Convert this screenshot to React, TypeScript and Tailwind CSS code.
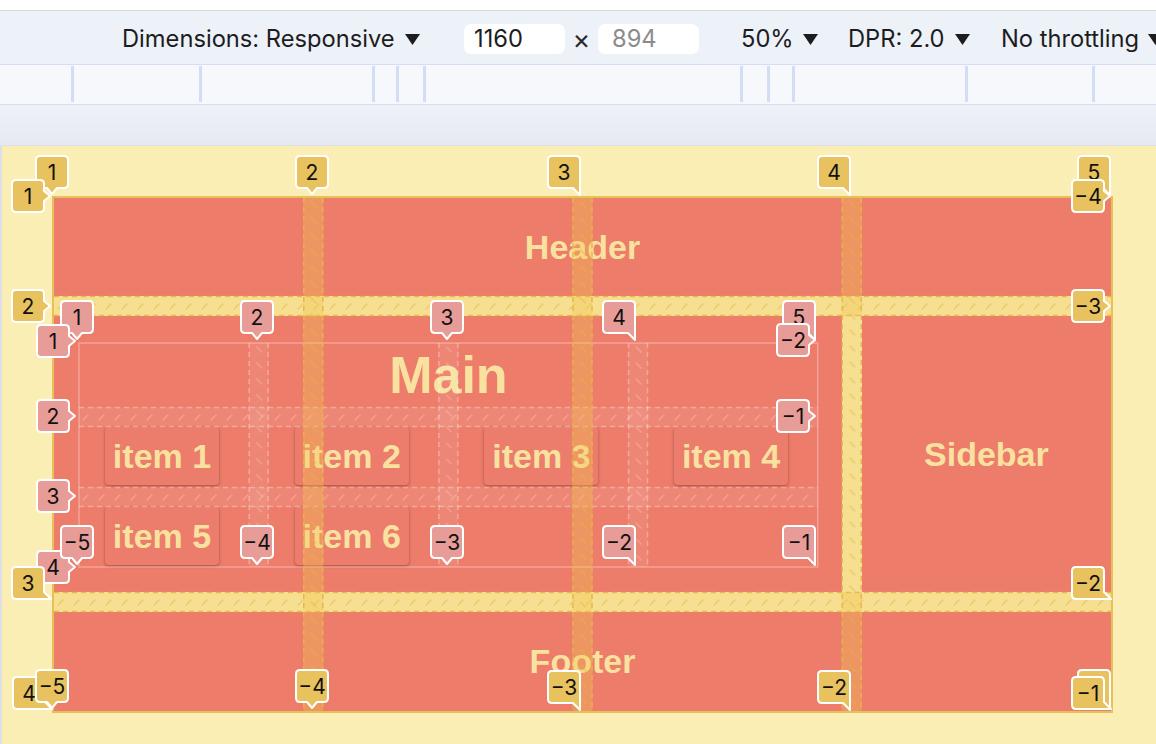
import type { ReactNode } from "react";

type Arrow = "down" | "right" | "tailDown" | "tailRight";
type Tag = { x: number; y: number; t: string; a: Arrow };

// label outlines, box is 34x34, arrow sticks out
const PATHS: Record<Arrow, string> = {
  down: "M5 1H29Q33 1 33 5V29Q33 33 29 33H22L17 39L12 33H5Q1 33 1 29V5Q1 1 5 1Z",
  right: "M5 1H29Q33 1 33 5V12L39 17L33 22V29Q33 33 29 33H5Q1 33 1 29V5Q1 1 5 1Z",
  tailDown: "M5 1H29Q33 1 33 5V40L26 33H5Q1 33 1 29V5Q1 1 5 1Z",
  tailRight: "M5 1H29Q33 1 33 5V26L40 33H5Q1 33 1 29V5Q1 1 5 1Z",
};

const innerTags: Tag[] = [
  { x: 60, y: 300, t: "1", a: "down" },
  { x: 240, y: 300, t: "2", a: "down" },
  { x: 430, y: 300, t: "3", a: "down" },
  { x: 602, y: 300, t: "4", a: "tailDown" },
  { x: 782, y: 300, t: "5", a: "tailDown" },
  { x: 36, y: 324, t: "1", a: "right" },
  { x: 36, y: 399, t: "2", a: "right" },
  { x: 36, y: 479, t: "3", a: "right" },
  { x: 36, y: 550, t: "4", a: "right" },
  { x: 776, y: 323, t: "−2", a: "right" },
  { x: 776, y: 399, t: "−1", a: "right" },
  { x: 60, y: 525, t: "−5", a: "down" },
  { x: 240, y: 525, t: "−4", a: "down" },
  { x: 430, y: 525, t: "−3", a: "down" },
  { x: 602, y: 525, t: "−2", a: "tailDown" },
  { x: 782, y: 525, t: "−1", a: "tailDown" },
];

const outerTags: Tag[] = [
  { x: 35, y: 155, t: "1", a: "down" },
  { x: 295, y: 155, t: "2", a: "down" },
  { x: 547, y: 155, t: "3", a: "tailDown" },
  { x: 817, y: 155, t: "4", a: "tailDown" },
  { x: 1077, y: 155, t: "5", a: "tailDown" },
  { x: 11, y: 179, t: "1", a: "right" },
  { x: 11, y: 289, t: "2", a: "right" },
  { x: 11, y: 566, t: "3", a: "tailRight" },
  { x: 1071, y: 179, t: "−4", a: "right" },
  { x: 1071, y: 289, t: "−3", a: "right" },
  { x: 1071, y: 566, t: "−2", a: "tailRight" },
  { x: 12, y: 676, t: "4", a: "tailRight" },
  { x: 35, y: 669, t: "−5", a: "down" },
  { x: 295, y: 669, t: "−4", a: "down" },
  { x: 547, y: 670, t: "−3", a: "tailDown" },
  { x: 817, y: 670, t: "−2", a: "tailDown" },
  { x: 1077, y: 669, t: "−1", a: "tailDown" },
  { x: 1071, y: 676, t: "−1", a: "tailRight" },
];

const ticks = [71, 199, 372, 396, 423, 740, 767, 792, 965, 1092];

function GridTag({ tag, fill }: { tag: Tag; fill: string }) {
  return (
    <div className="absolute h-[34px] w-[34px]" style={{ left: tag.x, top: tag.y }}>
      <svg className="absolute left-0 top-0 overflow-visible" width="34" height="34">
        <path d={PATHS[tag.a]} fill={fill} stroke="#fff" strokeWidth="2" strokeLinejoin="round" />
      </svg>
      <span className="relative flex h-full w-full items-center justify-center text-[21px] leading-none text-[#111]">
        {tag.t}
      </span>
    </div>
  );
}

function Caret() {
  return (
    <svg width="15" height="11" viewBox="0 0 15 11" className="shrink-0">
      <polygon points="0,0 15,0 7.5,11" fill="#1d1d1f" />
    </svg>
  );
}

type Gap = { x: number; y: number; w: number; h: number; dir: "h" | "v" };

function GapBand({ g, tint, tintOpacity, hatch, line, lineOpacity }: {
  g: Gap;
  tint: string;
  tintOpacity: number;
  hatch: string;
  line: string;
  lineOpacity: number;
}) {
  return (
    <g transform={`translate(${g.x} ${g.y})`}>
      <rect width={g.w} height={g.h} fill={tint} fillOpacity={tintOpacity} />
      <rect width={g.w} height={g.h} fill={`url(#${hatch})`} />
      {g.dir === "h" ? (
        <>
          <line x1="0" y1="0.5" x2={g.w} y2="0.5" stroke={line} strokeOpacity={lineOpacity} strokeWidth="1.5" strokeDasharray="5 4" />
          <line x1="0" y1={g.h - 0.5} x2={g.w} y2={g.h - 0.5} stroke={line} strokeOpacity={lineOpacity} strokeWidth="1.5" strokeDasharray="5 4" />
        </>
      ) : (
        <>
          <line x1="0.5" y1="0" x2="0.5" y2={g.h} stroke={line} strokeOpacity={lineOpacity} strokeWidth="1.5" strokeDasharray="5 4" />
          <line x1={g.w - 0.5} y1="0" x2={g.w - 0.5} y2={g.h} stroke={line} strokeOpacity={lineOpacity} strokeWidth="1.5" strokeDasharray="5 4" />
        </>
      )}
    </g>
  );
}

function GridOverlay() {
  const outer: Gap[] = [
    { x: 54, y: 296, w: 1057, h: 20, dir: "h" },
    { x: 54, y: 592, w: 1057, h: 20, dir: "h" },
    { x: 303.25, y: 198, w: 20, h: 513, dir: "v" },
    { x: 572.5, y: 198, w: 20, h: 513, dir: "v" },
    { x: 841.75, y: 198, w: 20, h: 513, dir: "v" },
  ];
  const inner: Gap[] = [
    { x: 79, y: 407, w: 738.75, h: 20, dir: "h" },
    { x: 79, y: 487, w: 738.75, h: 20, dir: "h" },
    { x: 248.69, y: 343, w: 20, h: 224, dir: "v" },
    { x: 438.38, y: 343, w: 20, h: 224, dir: "v" },
    { x: 628.06, y: 343, w: 20, h: 224, dir: "v" },
  ];
  return (
    <svg className="pointer-events-none absolute left-0 top-0" width="1156" height="744">
      <defs>
        <pattern id="gold-h" width="16" height="20" patternUnits="userSpaceOnUse">
          <path d="M4 13L9 8" stroke="#e2b443" strokeOpacity="0.55" strokeWidth="1.2" strokeLinecap="round" />
        </pattern>
        <pattern id="gold-v" width="20" height="16" patternUnits="userSpaceOnUse">
          <path d="M8 4L13 9" stroke="#e2b443" strokeOpacity="0.55" strokeWidth="1.2" strokeLinecap="round" />
        </pattern>
        <pattern id="pink-h" width="16" height="20" patternUnits="userSpaceOnUse">
          <path d="M4 13L9 8" stroke="#ffffff" strokeOpacity="0.22" strokeWidth="1.2" strokeLinecap="round" />
        </pattern>
        <pattern id="pink-v" width="20" height="16" patternUnits="userSpaceOnUse">
          <path d="M8 4L13 9" stroke="#ffffff" strokeOpacity="0.22" strokeWidth="1.2" strokeLinecap="round" />
        </pattern>
      </defs>

      {/* nested grid inside Main */}
      <rect x="79" y="343" width="738.75" height="224" fill="none" stroke="#ffffff" strokeOpacity="0.3" strokeWidth="1.5" />
      {inner.map((g, i) => (
        <GapBand key={i} g={g} tint="#ffffff" tintOpacity={0.08} hatch={g.dir === "h" ? "pink-h" : "pink-v"} line="#ffffff" lineOpacity={0.3} />
      ))}

      {/* page grid */}
      {outer.map((g, i) => (
        <GapBand key={i} g={g} tint="#f2c453" tintOpacity={0.36} hatch={g.dir === "h" ? "gold-h" : "gold-v"} line="#e3b645" lineOpacity={0.9} />
      ))}
    </svg>
  );
}

function Area({ className, children }: { className: string; children: ReactNode }) {
  return (
    <div className={`flex items-center justify-center bg-[#ed7c6a] text-[34px] font-bold text-[#f9e2a0] ${className}`}>
      {children}
    </div>
  );
}

function Item({ label }: { label: string }) {
  return (
    <div className="ml-[26px] flex h-[58px] w-[114px] items-center justify-center self-start rounded-[4px] bg-[#ec7d6c] text-[34px] font-bold text-[#f9e2a0] shadow-[0_1px_3px_rgba(80,20,10,0.45)]">
      {label}
    </div>
  );
}

export default function App() {
  return (
    <div className="relative flex h-[744px] w-[1156px] flex-col overflow-hidden bg-white [font-family:Inter,'Noto_Sans',sans-serif]">
      <div className="h-[11px] shrink-0 border-b border-[#d9d9d9] bg-white" />

      {/* devtools toolbar */}
      <div className="flex h-[53px] shrink-0 items-center overflow-hidden bg-[#edf1f8] pl-[122px] pt-[3px] text-[23.7px] text-[#1d1d1f]">
        <span className="w-[283px] shrink-0 whitespace-nowrap">Dimensions: Responsive</span>
        <Caret />
        <div className="ml-[44px] flex h-[30px] w-[101px] shrink-0 items-center rounded-[7px] bg-white pl-[10px]">1160</div>
        <span className="w-[33px] shrink-0 text-center text-[27px] leading-none text-[#2a2a2a]">×</span>
        <div className="flex h-[30px] w-[101px] shrink-0 items-center rounded-[7px] bg-white pl-[14px] text-[#8b8b8b]">894</div>
        <span className="ml-[42px] w-[62px] shrink-0 whitespace-nowrap">50%</span>
        <Caret />
        <span className="ml-[30px] w-[107px] shrink-0 whitespace-nowrap">DPR: 2.0</span>
        <Caret />
        <span className="ml-[31px] w-[147px] shrink-0 whitespace-nowrap">No throttling</span>
        <Caret />
      </div>

      {/* ruler */}
      <div className="h-[41px] shrink-0 border-y border-[#d3ddf3] bg-[#f6f8fc]">
        <svg width="1156" height="39">
          {ticks.map((x) => (
            <rect key={x} x={x} y="1" width="3" height="36" fill="#d3ddf4" />
          ))}
        </svg>
      </div>

      <div className="h-[40px] shrink-0 bg-gradient-to-b from-[#eef1f8] to-[#e6e9f1]" />

      {/* page */}
      <div className="flex-1 border-l-2 border-t border-[#dcdfe5] bg-[#fbeeb5] pl-[50px] pt-[50px] [font-family:'Liberation_Sans',Arial,sans-serif]">
        <div className="grid h-[517px] w-[1061px] grid-cols-4 grid-rows-[98px_276px_99px] gap-5 border-2 border-[#e8c05a]">
          <Area className="col-span-4">Header</Area>
          <div className="col-span-3 bg-[#ed7c6a] pl-[25px] pr-[24px] pt-[27px]">
            <div className="grid grid-cols-4 grid-rows-[64px_60px_60px] gap-5">
              <div className="col-span-4 flex items-center justify-center text-[52px] font-bold text-[#f9e2a0]">Main</div>
              {["item 1", "item 2", "item 3", "item 4", "item 5", "item 6"].map((s) => (
                <Item key={s} label={s} />
              ))}
            </div>
          </div>
          <Area className="">Sidebar</Area>
          <Area className="col-span-4">Footer</Area>
        </div>
      </div>

      <GridOverlay />
      {innerTags.map((t, i) => (
        <GridTag key={`i${i}`} tag={t} fill="#e89c98" />
      ))}
      {outerTags.map((t, i) => (
        <GridTag key={`o${i}`} tag={t} fill="#e8c25f" />
      ))}
    </div>
  );
}
